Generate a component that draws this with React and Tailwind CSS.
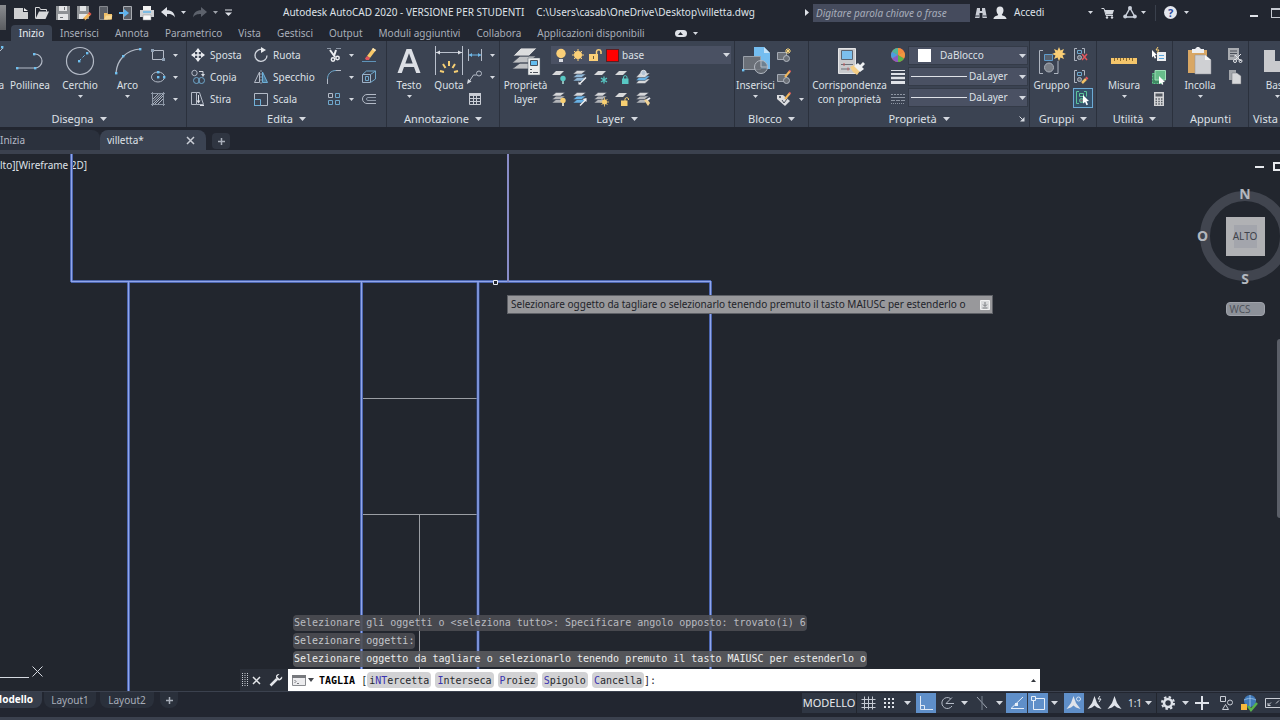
import React, { useState } from 'react';

const Svg = ({ w = 16, h = 16, children }) => (
  <svg
    width={w}
    height={h}
    viewBox={`0 0 ${w} ${h}`}
    fill="none"
    stroke="#b4bbc7"
    className="shrink-0"
    aria-hidden="true"
  >
    {children}
  </svg>
);

const Caret = () => (
  <svg width="7" height="4" viewBox="0 0 7 4" className="shrink-0" aria-hidden="true">
    <path d="M0 0h7L3.500 4z" fill="#d5d9e0" />
  </svg>
);

const SmallCaret = () => (
  <svg width="5" height="3" viewBox="0 0 5 3" className="shrink-0" aria-hidden="true">
    <path d="M0 0h5L2.500 3z" fill="#d5d9e0" />
  </svg>
);

/* ---------- quick access icons ---------- */

const NewIcon = () => (
  <Svg>
    <path d="M1 3h9v4h5v7H1z" fill="#cfd0d2" stroke="none" />
    <path d="M11 3l4 3h-4z" fill="#f0f0f0" stroke="none" />
  </Svg>
);

const OpenIcon = () => (
  <Svg>
    <path d="M1.500 13.500v-11h4l1 2h6v2" stroke="#d8d9db" />
    <path d="M1.500 14L5 6.500h10L11.500 14z" fill="#d8d9db" stroke="none" />
  </Svg>
);

const SaveIcon = () => (
  <Svg>
    <path d="M1 1h14v14H1z" fill="#8f9296" stroke="none" />
    <path d="M4 1h8v5H4zM3 9h10v6H3z" fill="#e4e5e7" stroke="none" />
    <path d="M9.500 2v3M5 12.500h3" stroke="#6d7075" />
  </Svg>
);

const SaveAsIcon = () => (
  <Svg>
    <path d="M1 1h12v13H1z" fill="#8f9296" stroke="none" />
    <path d="M4 1h6v5H4zM3 9h8v5H3z" fill="#e4e5e7" stroke="none" />
    <path d="M8 14.500l6-6" stroke="#f3b65a" strokeWidth="3" />
    <path d="M13 9.500l1.500-1.500" stroke="#d9534b" strokeWidth="3" />
    <path d="M7 15.500l1.500-1.500" stroke="#22262f" strokeWidth="1.500" />
  </Svg>
);

const OpenMobileIcon = () => (
  <Svg>
    <path d="M2.500 1.500h8v13h-8z" fill="#5a5e66" stroke="#85888e" />
    <path d="M7 14.500V8h3l1 1h4v5.500z" fill="#f0c069" stroke="none" />
    <path d="M7 14.500l2-4h6.500l-2 4z" fill="#f8d996" stroke="none" />
  </Svg>
);

const SaveMobileIcon = () => (
  <Svg>
    <path d="M5.500 1.500h8v13h-8z" fill="#5a5e66" stroke="#a9acb2" />
    <path d="M1 7h5V4l5 4-5 4V9H1z" fill="#5fb4ee" stroke="none" />
  </Svg>
);

const PrintIcon = () => (
  <Svg>
    <path d="M4 1h8v4H4z" fill="#f2f2f2" stroke="none" />
    <path d="M1 5h14v7H1z" fill="#cfd1d4" stroke="none" />
    <path d="M4 7h8" stroke="#62b5e8" strokeWidth="1.500" />
    <path d="M4 10h8v5H4z" fill="#fafafa" stroke="#8a8d92" strokeWidth="0.500" />
  </Svg>
);

const UndoIcon = () => (
  <Svg>
    <path d="M1 7l6-5v3.200c4.500 0 7.500 2.300 8 7.300-1.800-3-4-3.600-8-3.600V12z" fill="#dfe2e8" stroke="none" />
  </Svg>
);

const RedoIcon = () => (
  <Svg>
    <path d="M15 7L9 2v3.200c-4.500 0-7.500 2.300-8 7.300 1.800-3 4-3.600 8-3.600V12z" fill="#5d626c" stroke="none" />
  </Svg>
);

/* ---------- draw panel icons ---------- */

const Dot = ({ x, y }) => (
  <rect x={x - 1} y={y - 1} width="2.400" height="2.400" fill="#6fc0f0" stroke="none" />
);

const PolylineIcon = () => (
  <Svg w={32} h={32}>
    <path d="M3 23h18a7 7 0 000-14h-1" strokeWidth="1.200" />
    <Dot x={3} y={23} />
    <Dot x={21} y={23} />
    <Dot x={20} y={9} />
  </Svg>
);

const CircleIcon = () => (
  <Svg w={32} h={32}>
    <circle cx="16" cy="16" r="13.500" strokeWidth="1.200" />
    <path d="M15 16l8-8" stroke="#6fb8e8" strokeDasharray="3 2" />
    <Dot x={15} y={16} />
    <Dot x={23} y={8} />
  </Svg>
);

const ArcIcon = () => (
  <Svg w={32} h={32}>
    <path d="M4 28C5 15 14 5 28 4" strokeWidth="1.200" />
    <Dot x={4} y={28} />
    <Dot x={11} y={11} />
    <Dot x={28} y={4} />
  </Svg>
);

const RectIcon = () => (
  <Svg>
    <path d="M2.500 3.500h11v9h-11z" />
    <path d="M1 2h3v3H1zM12 11h3v3h-3z" fill="#8fa0b4" stroke="none" />
  </Svg>
);

const EllipseIcon = () => (
  <Svg>
    <ellipse cx="8" cy="8" rx="6.500" ry="5" />
    <Dot x={8} y={8} />
    <Dot x={8} y={3} />
    <Dot x={14} y={8} />
  </Svg>
);

const HatchIcon = () => (
  <Svg>
    <path d="M2.500 1v14M13.500 1v14M1 2.500h14M1 13.500h14" stroke="#8d97a6" />
    <path d="M3 8l5-5M3 13L13 3M8 13l5-5M5 13l8-8M3 10.500l7.500-7.500" stroke="#aab2bf" />
  </Svg>
);

/* ---------- edit panel icons ---------- */

const MoveIcon = () => (
  <Svg>
    <path d="M8 2v12M2 8h12" stroke="#e8eaee" strokeWidth="1.500" />
    <path d="M8 1l3 4H5zM8 15l3-4H5zM1 8l4-3v6zM15 8l-4-3v6z" fill="#e8eaee" stroke="none" />
  </Svg>
);

const CopyIcon = () => (
  <Svg>
    <circle cx="4.500" cy="4" r="2.700" />
    <path d="M9 2.500h4v3" stroke="#d5d9e0" />
    <path d="M11 5h4l-2 3z" fill="#d5d9e0" stroke="none" />
    <circle cx="6.500" cy="11.500" r="3" stroke="#6fa8cc" />
    <circle cx="11.500" cy="11.500" r="3" stroke="#6fa8cc" />
  </Svg>
);

const StretchIcon = () => (
  <Svg>
    <path d="M1.500 1.500h5v12h-5zM6.500 1.500h3l4 12H6.500" />
    <path d="M8.500 4v7M10 14.500h4" stroke="#dfe2e8" />
    <path d="M6.500 9.500h4l-2 3z" fill="#dfe2e8" stroke="none" />
  </Svg>
);

const RotateIcon = () => (
  <Svg>
    <path d="M9 2.500a6 6 0 105 6" strokeWidth="1.300" stroke="#d0d5dd" />
    <path d="M8 0l5 3-5 3z" fill="#e8eaee" stroke="none" />
  </Svg>
);

const MirrorIcon = () => (
  <Svg>
    <path d="M6.500 3v10.500h-5z" />
    <path d="M9.500 3v10.500h5z" stroke="#6fb0d8" fill="#4b7896" />
    <path d="M8 1v14" stroke="#8d97a6" strokeDasharray="2 1" />
  </Svg>
);

const ScaleIcon = () => (
  <Svg>
    <path d="M1.500 2.500h13v12h-13z" />
    <path d="M1.500 8.500h6v6h-6z" stroke="#6fb0d8" />
  </Svg>
);

const TrimIcon = () => (
  <Svg>
    <path d="M1 1.500h4M10 1.500h5" stroke="#8d97a6" />
    <path d="M4 3l5 7M10 3L8 9" stroke="#eceef1" strokeWidth="2" />
    <circle cx="7" cy="12.500" r="1.700" stroke="#eceef1" strokeWidth="1.500" />
    <circle cx="11.500" cy="11" r="1.700" stroke="#eceef1" strokeWidth="1.500" />
  </Svg>
);

const FilletIcon = () => (
  <Svg>
    <path d="M1.500 15V10C1.500 5 5 1.500 10 1.500" stroke="#6fa8cc" />
    <path d="M1.500 15v-5M10 1.500h5" />
  </Svg>
);

const ArrayIcon = () => (
  <Svg>
    <path d="M2.500 2.500h4v4h-4z" />
    <path d="M9.500 2.500h4v4h-4zM2.500 9.500h4v4h-4zM9.500 9.500h4v4h-4z" stroke="#6fa8cc" />
  </Svg>
);

const EraseIcon = () => (
  <Svg>
    <path d="M1 14.500h14" stroke="#5f93b8" />
    <path d="M6 9l6-8 3 2-6 8z" fill="#f7c868" stroke="none" />
    <path d="M6 9l3 2-1 2H5l-1-1.500z" fill="#e2565c" stroke="none" />
    <path d="M12 1l3 2-1 1.500-3-2z" fill="#fbe6b8" stroke="none" />
  </Svg>
);

const ExplodeIcon = () => (
  <Svg>
    <path d="M1.500 5.500h8v8h-8z" stroke="#9fb3c8" />
    <path d="M1.500 5.500l4-3.500h9l-5 3.500M14.500 2v8l-5 3.500" stroke="#6fa8cc" />
    <path d="M4.500 7.500h3v4h-3z" stroke="#6fa8cc" />
  </Svg>
);

const OffsetIcon = () => (
  <Svg>
    <path d="M15 3.500H6a4.500 4.500 0 000 9h9" />
    <path d="M15 6.500H7a1.500 1.500 0 000 3h8" stroke="#8d97a6" />
  </Svg>
);

/* ---------- annotation icons ---------- */

const TextIcon = () => (
  <Svg w={24} h={28}>
    <path
      fillRule="evenodd"
      d="M0.500 26L9.500 2h5l9 24h-4.300l-2.200-6H7l-2.200 6zM8.300 16.500h7.400L12 6.200z"
      fill="#dcdfe5"
      stroke="none"
    />
  </Svg>
);

const DimensionIcon = () => (
  <Svg w={30} h={32}>
    <path d="M1.500 1v29M28.500 1v29M2 7.500h26" stroke="#b9c0cc" />
    <path d="M2 7.500l4-2v4zM28 7.500l-4-2v4z" fill="#dcdfe5" stroke="none" />
    <path d="M15 16v5M9 19l2.500 4M21 19l-2.500 4M6 26l4 1M24 26l-4 1" stroke="#f6cf74" strokeWidth="2" />
  </Svg>
);

const LinearIcon = () => (
  <Svg>
    <path d="M1.500 2v12M14.500 2v12" />
    <path d="M2 8h12" stroke="#6fb8e8" />
    <path d="M2 8l3-2v4zM14 8l-3-2v4z" fill="#6fb8e8" stroke="none" />
  </Svg>
);

const LeaderIcon = () => (
  <Svg>
    <circle cx="12" cy="4.500" r="2.500" />
    <path d="M9.500 6H6.500l-4 6" />
    <path d="M0 15l1-5 3.500 2.500z" fill="#d5d9e0" stroke="none" />
  </Svg>
);

const TableIcon = () => (
  <Svg>
    <path d="M2 2h12v3H2z" fill="#c9cdd5" stroke="none" />
    <path d="M2.500 2.500h11v11h-11zM2.500 7.500h11M2.500 10.500h11M6.500 5v8.500M9.500 5v8.500" stroke="#c9cdd5" />
  </Svg>
);

/* ---------- layer icons ---------- */

const LayerPropsIcon = () => (
  <Svg w={30} h={32}>
    <path d="M9 18h16l-8 6H1zM9 11h16l-8 7H1z" fill="#bfc1c4" stroke="#3b4352" strokeWidth="0.800" />
    <path d="M10 3h16l-8 8H2z" fill="#dcddde" stroke="#3b4352" strokeWidth="0.800" />
    <path d="M17 13h12v17H17z" fill="#eceded" stroke="#54606e" strokeWidth="0.500" />
    <path d="M19.500 15.500h7v5h-7z" fill="#63bdf0" stroke="#48525f" />
    <path d="M19 24.500h2M19 27.500h2M22 27.500h5" stroke="#50565f" />
  </Svg>
);

const Sheets = ({ top = '#d7d8da', low = '#b4b6ba' }) => (
  <>
    <path d="M5 8.500h9L9.500 12H1z" fill={low} stroke="#3b4352" strokeWidth="0.500" />
    <path d="M5 5h9L9.500 8.500H1z" fill={low} stroke="#3b4352" strokeWidth="0.500" />
    <path d="M5 1.500h9L9.500 5H1z" fill={top} stroke="#3b4352" strokeWidth="0.500" />
  </>
);

const OneSheet = () => <path d="M5 2h8L9 6H1z" fill="#d7d8da" stroke="none" />;

const LayerOffIcon = () => (
  <Svg>
    <OneSheet />
    <circle cx="12" cy="9.500" r="2.700" fill="#58c8c4" stroke="none" />
    <path d="M11 12h2v3h-2z" fill="#8fb9b8" stroke="none" />
  </Svg>
);

const LayerIsoIcon = () => (
  <Svg>
    <Sheets low="#8fb6d6" />
    <path d="M8 14.500l6-6" stroke="#f2f3f5" strokeWidth="1.500" />
    <path d="M6.500 12.500l3 3h-3z" fill="#f2f3f5" stroke="none" />
  </Svg>
);

const LayerFreezeIcon = () => (
  <Svg>
    <OneSheet />
    <path d="M11 7.500v7M8 9l6 4M14 9l-6 4" stroke="#58c8c4" strokeWidth="1.300" />
  </Svg>
);

const LayerLockIcon = () => (
  <Svg>
    <OneSheet />
    <path d="M9.500 10V8a1.800 1.800 0 013.500 0v2" stroke="#58c8c4" />
    <path d="M8 9.500h6.500V15H8z" fill="#58c8c4" stroke="none" />
  </Svg>
);

const LayerCurrentIcon = () => (
  <Svg>
    <path d="M5 10h10l-5 4.500H1z" fill="#d7d8da" stroke="#3b4352" strokeWidth="0.500" />
    <path d="M5 7h10l-5 4.500H1z" fill="#69b3e6" stroke="#3b4352" strokeWidth="0.500" />
    <path d="M5 4h10l-5 4.500H1z" fill="#d7d8da" stroke="#3b4352" strokeWidth="0.500" />
    <circle cx="8.500" cy="4" r="2.700" fill="#b4c4d4" stroke="#e0e3e8" />
  </Svg>
);

const LayerOnIcon = () => (
  <Svg>
    <Sheets />
    <circle cx="12" cy="9.500" r="2.700" fill="#f7cf72" stroke="none" />
    <path d="M11 12h2v3h-2z" fill="#d8d2c0" stroke="none" />
  </Svg>
);

const LayerUnisoIcon = () => (
  <Svg>
    <Sheets low="#69b3e6" />
    <path d="M8 14.500l6-6" stroke="#f2f3f5" strokeWidth="1.500" />
    <path d="M14.500 7v4l-4-3z" fill="#f2f3f5" stroke="none" />
  </Svg>
);

const LayerThawIcon = () => (
  <Svg>
    <Sheets />
    <circle cx="11.500" cy="11" r="2.500" fill="#f7cf72" stroke="none" />
    <path d="M11.500 6.500v9M7 11h9M8.500 8l6 6M14.500 8l-6 6" stroke="#f7cf72" strokeWidth="0.800" />
  </Svg>
);

const LayerUnlockIcon = () => (
  <Svg>
    <OneSheet />
    <path d="M11 10V8a1.800 1.800 0 013.500 0v1" stroke="#f7cf72" />
    <path d="M7 9.500h6.500V15H7z" fill="#f7cf72" stroke="none" />
  </Svg>
);

const LayerMatchIcon = () => (
  <Svg>
    <Sheets />
    <path d="M9 9l3-1 3 4-2 3z" fill="#f0d296" stroke="none" />
    <path d="M12 9l3-2" stroke="#e8eaee" strokeWidth="2" />
  </Svg>
);

const BulbIcon = () => (
  <Svg w={14}>
    <circle cx="7" cy="6.500" r="4.700" fill="#fbcf78" stroke="none" />
    <path d="M5 12h4v3H5z" fill="#d9dbe0" stroke="none" />
  </Svg>
);

const SunIcon = () => (
  <Svg w={14}>
    <circle cx="7" cy="8" r="4" fill="#fbcf78" stroke="none" />
    <path d="M7 2v12M1 8h12M3 4l8 8M11 4l-8 8" stroke="#fbcf78" />
  </Svg>
);

const PadlockIcon = () => (
  <Svg w={14}>
    <path d="M8.500 7V4.500a2.300 2.300 0 014.500 0V7" stroke="#fbcf78" strokeWidth="1.500" />
    <path d="M1 7h9v7H1z" fill="#fbcf78" stroke="none" />
    <path d="M5.500 9v3" stroke="#6d5b36" />
  </Svg>
);

/* ---------- block icons ---------- */

const InsertIcon = () => (
  <Svg w={30} h={32}>
    <path d="M13 2h10l6 6v16H13z" fill="#74bdf0" stroke="none" />
    <path d="M23 2l6 6h-6z" fill="#c3e2f8" stroke="none" />
    <path d="M2.500 11.500h17v13h-17z" fill="#6b7078" stroke="#9aa0a9" />
    <circle cx="20" cy="22" r="6.500" fill="#6b7078" fillOpacity="0.800" stroke="#b4bac3" />
    <path d="M20 16v6h6" stroke="#b4bac3" />
    <Dot x={2} y={25} />
  </Svg>
);

const SmallBlock = () => (
  <>
    <path d="M1.500 5.500h9v7h-9z" fill="#6b7078" stroke="#a4aab4" />
    <circle cx="10.500" cy="11.500" r="3" fill="#6b7078" stroke="#b4bac3" />
  </>
);

const CreateBlockIcon = () => (
  <Svg>
    <SmallBlock />
    <path d="M12 1v6M9 4h6M10 2l4 4M14 2l-4 4" stroke="#f9d67e" />
  </Svg>
);

const EditBlockIcon = () => (
  <Svg>
    <SmallBlock />
    <path d="M9 8l5-6" stroke="#f3b65a" strokeWidth="2" />
    <path d="M13.500 2.500l1-1" stroke="#e2565c" strokeWidth="2" />
  </Svg>
);

const AttribIcon = () => (
  <Svg>
    <path d="M1 4l6 0 7 6-5 5-8-7z" fill="#dcdde0" stroke="none" />
    <circle cx="4" cy="6" r="1" fill="#3b4352" stroke="none" />
    <path d="M6 9l2 3 3-4" stroke="#4a4f59" />
    <path d="M9 8l5-6" stroke="#f3b65a" strokeWidth="2" />
    <path d="M13.500 2.500l1-1" stroke="#e2565c" strokeWidth="2" />
  </Svg>
);

/* ---------- properties icons ---------- */

const MatchPropsIcon = () => (
  <Svg w={30} h={32}>
    <path d="M3.500 3.500h17v25h-17z" fill="#c9cacd" stroke="#e4e5e7" />
    <path d="M6.500 5.500h11v9h-11z" fill="#7cc0ee" stroke="#5d6672" />
    <path d="M6 19.500h12M6 24h9" stroke="#6b7078" />
    <path d="M9 18v3M13 22.500v3" stroke="#c7595b" />
    <path d="M15 22l4-2 6 6-3 4-4-3z" fill="#f4cd84" stroke="none" />
    <path d="M19 21l4-3 2 2 3-3 2 2-3 3 2 2-4 3z" fill="#eef0f2" stroke="none" />
  </Svg>
);

const ColorWheelIcon = () => (
  <Svg>
    <circle cx="8" cy="8" r="7" fill="#e9594c" stroke="none" />
    <path d="M8 8V1a7 7 0 016 3.500z" fill="#f18c3e" stroke="none" />
    <path d="M8 8l6-3.500a7 7 0 010 7z" fill="#f0983f" stroke="none" />
    <path d="M8 8l6 3.500A7 7 0 018 15z" fill="#58b947" stroke="none" />
    <path d="M8 8v7a7 7 0 01-6-3.500z" fill="#8a5cc4" stroke="none" />
    <path d="M8 8l-6 3.500a7 7 0 010-7z" fill="#4a9fe0" stroke="none" />
    <path d="M8 8L2 4.500A7 7 0 018 1z" fill="#4fb89a" stroke="none" />
  </Svg>
);

const WeightIcon = () => (
  <Svg>
    <path d="M1 1.500h14" stroke="#dfe2e7" />
    <path d="M1 5h14" stroke="#dfe2e7" strokeWidth="2" />
    <path d="M1 9h14" stroke="#dfe2e7" strokeWidth="2.500" />
    <path d="M1 13.500h14" stroke="#dfe2e7" strokeWidth="3" />
  </Svg>
);

const LinetypeIcon = () => (
  <Svg>
    <path d="M1 3.500h14" stroke="#8d95a2" strokeDasharray="2 1" />
    <path d="M1 6.500h14" stroke="#8d95a2" />
    <path d="M1 9.500h14" stroke="#8d95a2" strokeDasharray="4 1" />
    <path d="M1 12.500h14" stroke="#8d95a2" strokeDasharray="1 1" />
  </Svg>
);

const LauncherIcon = () => (
  <Svg w={6} h={6}>
    <path d="M0.500 0.500l3 3" stroke="#d5d9e0" />
    <path d="M5.500 1v4.500H1z" fill="#d5d9e0" stroke="none" />
  </Svg>
);

/* ---------- group, utility and clipboard icons ---------- */

const Star = ({ x, y }) => (
  <g transform={`translate(${x} ${y})`}>
    <path
      d="M0-7l1.500 3.500L5-5 3.500-1.500 7 0 3.500 1.500 5 5 1.500 3.500 0 7l-1.500-3.500L-5 5l1.500-3.500L-7 0l3.500-1.500L-5-5l3.500 1.500z"
      fill="#f9ce75"
      stroke="none"
    />
  </g>
);

const GroupIcon = () => (
  <Svg w={30} h={32}>
    <path d="M6 5.500H2.500v23H6M17 28.500h4V16" stroke="#aeb5c0" />
    <path d="M7.500 9.500h8v6h-8z" fill="#56616f" stroke="#5f9ccc" />
    <circle cx="12" cy="22.500" r="4.500" fill="#7a7f87" stroke="#a9afb9" />
    <Star x={22} y={9} />
  </Svg>
);

const SmallGroup = ({ color = '#aeb5c0', box = '#6fa8cc' }) => (
  <>
    <path d="M4 1.500H1.500v12H4M9 1.500h2.500v5" stroke={color} />
    <path d="M4.500 3.500h4v3h-4z" stroke={box} />
    <circle cx="6.500" cy="10.500" r="2" fill="#6b7078" stroke={color} />
  </>
);

const UngroupIcon = () => (
  <Svg>
    <SmallGroup />
    <path d="M9 7l5 6M14 7l-5 6" stroke="#e2565c" strokeWidth="1.500" />
  </Svg>
);

const GroupEditIcon = () => (
  <Svg>
    <SmallGroup />
    <path d="M9 14l4-4" stroke="#f3c266" strokeWidth="2.500" />
    <path d="M13 10l1.500-1.500" stroke="#e2565c" strokeWidth="2.500" />
  </Svg>
);

const GroupSelectIcon = () => (
  <Svg>
    <SmallGroup color="#5cc59a" box="#5cc59a" />
    <path d="M8 5l6 6-2.500.3L13 14.500l-1.500.7-1.400-3.200L8 13.500z" fill="#fff" stroke="none" />
  </Svg>
);

const MeasureIcon = () => (
  <Svg w={28} h={32}>
    <path d="M1 13h26v6H1z" fill="#f5c66b" stroke="none" />
    <path d="M4.500 13v3M7.500 13v2M10.500 13v3M13.500 13v2M16.500 13v3M19.500 13v2M22.500 13v3" stroke="#8a6a2c" />
  </Svg>
);

const QuickSelectIcon = () => (
  <Svg>
    <path d="M6 5h9v9H6z" fill="#eceef1" stroke="none" />
    <path d="M8 8.500h5M8 11.500h5" stroke="#58a6de" />
    <path d="M1 3l5 5-2 .2L5.200 11l-1.500.6L2.600 9 1 10.500z" fill="#fff" stroke="none" />
    <path d="M7 0L5 3h3L6 6" stroke="#f9ce75" />
  </Svg>
);

const SelectAllIcon = () => (
  <Svg>
    <path d="M1.500 4.500h10v10h-10z" fill="#3f8a63" stroke="#5cc58a" strokeDasharray="2 1" />
    <path d="M4 1.500h10.500V11H4z" fill="#67bd8a" stroke="#9fe0b8" />
    <path d="M8 7l6 6-2.500.3.8 2-1.300.5-1-2L8 15z" fill="#fff" stroke="none" />
  </Svg>
);

const CalcIcon = () => (
  <Svg>
    <path d="M3 1h10v14H3z" fill="#d3d4d7" stroke="none" />
    <path d="M4.500 2.500h7v3h-7z" fill="#555a62" stroke="none" />
    <path d="M4.500 8h1.500M7.300 8h1.500M10 8h1.500M4.500 10.500h1.500M7.300 10.500h1.500M10 10.500h1.500M4.500 13h1.500M7.300 13h1.500M10 13h1.500" stroke="#555a62" strokeWidth="1.500" />
  </Svg>
);

const PasteIcon = () => (
  <Svg w={28} h={32}>
    <path d="M2 5h19v23H2z" fill="#d9a764" stroke="none" />
    <path d="M6 4h3l2-2h2l2 2h3v4H6z" fill="#eceef1" stroke="none" />
    <path d="M9 10h10l6 5v14H9z" fill="#cfd0d3" stroke="#8f9298" strokeWidth="0.500" />
    <path d="M19 10l6 5h-6z" fill="#f5f5f6" stroke="none" />
  </Svg>
);

const CutClipIcon = () => (
  <Svg>
    <path d="M1 1h11v12H1z" fill="#a9acb1" stroke="none" />
    <path d="M3 4h7M3 6.500h7M3 9h4" stroke="#4a4f59" />
    <path d="M8 8l6 6M14 7l-6 6" stroke="#e4e6ea" />
    <circle cx="13.500" cy="14" r="1.500" stroke="#e4e6ea" />
    <circle cx="8" cy="14" r="1.500" stroke="#e4e6ea" />
  </Svg>
);

const CopyClipIcon = () => (
  <Svg>
    <path d="M2 1h7v10H2z" fill="#a3a6ab" stroke="none" />
    <path d="M5 4h5l4 3v8H5z" fill="#d7d8da" stroke="#6d7178" strokeWidth="0.500" />
  </Svg>
);

const BaseIcon = () => (
  <Svg w={28} h={32}>
    <path d="M1 5h11v11h15v11H1z" fill="#c9cacd" stroke="none" />
  </Svg>
);

/* ---------- ribbon parts ---------- */

const BigTool = ({ icon, label, caret, width }) => (
  <button className={`flex flex-col items-center shrink-0 h-[66px] ${width}`}>
    <span className="h-[34px] flex items-center">{icon}</span>
    <span className="leading-[14px] whitespace-pre-line text-center">{label}</span>
    {caret && (
      <span className="h-2 flex items-center">
        <SmallCaret />
      </span>
    )}
  </button>
);

const SmallTool = ({ icon, label, caret, name }) => (
  <button aria-label={name || label} className="h-[22px] flex items-center gap-1 whitespace-nowrap">
    {icon}
    {label && <span>{label}</span>}
    {caret && (
      <span className="w-[10px] flex justify-center">
        <SmallCaret />
      </span>
    )}
  </button>
);

const Panel = ({ title, width, caret = true, shift = 'justify-center', launcher, children }) => (
  <section className={`flex flex-col shrink-0 border-r border-[#2b313d] ${width}`}>
    <div className="flex h-[70px] pt-[3px]">{children}</div>
    <button className={`h-4 flex items-center gap-[6px] ${shift}`}>
      <span className="text-[11px] leading-4">{title}</span>
      {caret && <Caret />}
      {launcher && (
        <span className="absolute right-1">
          <LauncherIcon />
        </span>
      )}
    </button>
  </section>
);

const TABS = [
  'Inserisci',
  'Annota',
  'Parametrico',
  'Vista',
  'Gestisci',
  'Output',
  'Moduli aggiuntivi',
  'Collabora',
  'Applicazioni disponibili',
];

const LAYER_TOOLS = [
  ['Layer off', <LayerOffIcon />],
  ['Isola', <LayerIsoIcon />],
  ['Congela', <LayerFreezeIcon />],
  ['Blocca', <LayerLockIcon />],
  ['Rendi corrente', <LayerCurrentIcon />],
  ['Attiva tutti i layer', <LayerOnIcon />],
  ['Annulla isolamento', <LayerUnisoIcon />],
  ['Scongela tutti i layer', <LayerThawIcon />],
  ['Sblocca', <LayerUnlockIcon />],
  ['Corrispondenza layer', <LayerMatchIcon />],
];

const TitleBar = () => (
  <header className="h-[25px] shrink-0 flex items-center text-[#dfe2e8]">
    <div className="w-[283px] shrink-0 flex items-center">
      <button aria-label="Menu applicazione" className="w-[6px] h-[25px] mt-[10px] mr-1 bg-linear-to-b from-[#8a8c90] to-[#5a5c60]" />
      {[
        ['Nuovo', <NewIcon />],
        ['Apri', <OpenIcon />],
        ['Salva', <SaveIcon />],
        ['Salva con nome', <SaveAsIcon />],
        ['Apri da Web e Mobile', <OpenMobileIcon />],
        ['Salva in Web e Mobile', <SaveMobileIcon />],
        ['Stampa', <PrintIcon />],
        ['Annulla', <UndoIcon />],
      ].map(([name, icon]) => (
        <button key={name} aria-label={name} className="w-[21px] flex justify-center">
          {icon}
        </button>
      ))}
      <button aria-label="Elenco annulla" className="w-[11px] flex justify-center"><SmallCaret /></button>
      <button aria-label="Ripeti" className="w-[21px] flex justify-center"><RedoIcon /></button>
      <button aria-label="Elenco ripeti" className="w-[11px] flex justify-center opacity-70"><SmallCaret /></button>
      <button aria-label="Personalizza" className="w-[14px] flex justify-center">
        <Svg w={7} h={8}>
          <path d="M0 1h7" stroke="#dfe2e8" />
          <path d="M0 3.500h7L3.500 7z" fill="#dfe2e8" stroke="none" />
        </Svg>
      </button>
    </div>
    <h1 className="flex-1 flex gap-3 whitespace-nowrap text-[10px]">
      <span>Autodesk AutoCAD 2020 - VERSIONE PER STUDENTI</span>
      <span>C:\Users\casab\OneDrive\Desktop\villetta.dwg</span>
    </h1>
    <div className="w-[475px] shrink-0 flex items-center overflow-hidden *:shrink-0">
      <span className="w-2">
        <Svg w={4} h={7}><path d="M0 0l4 3.500L0 7z" fill="#dfe2e8" stroke="none" /></Svg>
      </span>
      <input
        aria-label="Ricerca"
        placeholder="Digitare parola chiave o frase"
        className="w-[157px] h-[18px] px-[3px] bg-[#454b5d] text-[10px] italic placeholder:text-[#a7adba]"
      />
      <button aria-label="Cerca" className="w-[22px] flex justify-center">
        <Svg w={14}>
          <path d="M3 3h3v3h2V3h3l2 10H8.500V8h-3v5H1z" fill="#c9cdd5" stroke="none" />
          <path d="M1 11h4M9 11h4" stroke="#343a47" />
        </Svg>
      </button>
      <button className="w-[101px] flex items-center gap-[6px] text-[10px]">
        <Svg w={16}>
          <path d="M8 1.500c2.300 0 3.500 1.700 3.500 3.800S10.500 9 9.800 9.700c0 1 4.700 1.200 4.700 4.300h-13c0-3.100 4.700-3.300 4.700-4.300C5.500 9 4.500 7.400 4.500 5.300S5.700 1.500 8 1.500z" fill="#e0e3e8" stroke="none" />
        </Svg>
        <span className="flex-1 text-left">Accedi</span>
        <SmallCaret />
      </button>
      <button aria-label="App Store" className="w-[30px] flex justify-center">
        <Svg w={14}>
          <path d="M0.500 3.500h2.500l2 7h7" stroke="#d5d9e0" />
          <path d="M3.500 5H13l-1.500 4.500H5z" fill="#d5d9e0" stroke="none" />
          <circle cx="6" cy="12.500" r="1.200" fill="#d5d9e0" stroke="none" />
          <circle cx="11" cy="12.500" r="1.200" fill="#d5d9e0" stroke="none" />
        </Svg>
      </button>
      <button aria-label="Rete Autodesk" className="w-[33px] flex items-center gap-1 border-r border-[#3a404c]">
        <Svg w={14}>
          <path d="M7 3l5 9H2z" stroke="#c9cfda" strokeWidth="1.500" />
          <circle cx="7" cy="3" r="2" fill="#c9cfda" stroke="none" />
          <circle cx="2.200" cy="11.500" r="2" fill="#c9cfda" stroke="none" />
          <circle cx="11.800" cy="11.500" r="2" fill="#c9cfda" stroke="none" />
        </Svg>
        <SmallCaret />
      </button>
      <button aria-label="Guida" className="w-[94px] pl-2 flex items-center gap-[7px]">
        <span className="w-[13px] h-[13px] rounded-full bg-[#e4e7ee] text-[#2c4a9c] text-[11px] leading-[13px] font-bold">?</span>
        <SmallCaret />
      </button>
      <button aria-label="Riduci a icona" className="w-[21px] h-3 flex items-end pb-[2px]">
        <span className="w-2 h-[2px] bg-[#dfe2e8]" />
      </button>
      <button aria-label="Ingrandisci" className="w-[11px] h-[10px] border border-t-2 border-[#c5c9d1]" />
    </div>
  </header>
);

const TabBar = () => (
  <nav className="h-4 shrink-0 flex items-center pl-[11px] text-[10px] text-[#a8aeb9]">
    <button className="h-4 w-[41px] rounded-t-sm bg-[#3b4352] text-[#eceef2]">Inizio</button>
    {TABS.map((tab) => (
      <button key={tab} className="px-[8px] whitespace-nowrap">{tab}</button>
    ))}
    <button aria-label="Riduci barra multifunzione" className="ml-[22px] flex items-center gap-[6px]">
      <span className="w-3 h-[7px] rounded-sm bg-[#dfe2e8] flex items-center justify-center">
        <Svg w={5} h={3}><path d="M0 3h5L2.500 0z" fill="#22262f" stroke="none" /></Svg>
      </span>
      <SmallCaret />
    </button>
  </nav>
);

const PropertyCombo = ({ name, value, children }) => (
  <div className="h-[19px] pr-px flex items-center bg-[#4a5163] border border-[#343b48]">
    {children}
    <select aria-label={name} className="appearance-none bg-transparent w-[42px] shrink-0 text-[10px]">
      <option>{value}</option>
    </select>
    <span className="ml-auto"><Caret /></span>
  </div>
);

const Ribbon = () => (
  <div className="h-[86px] shrink-0 flex bg-[#3b4352] text-[10px] text-[#dde0e6] overflow-hidden">
    <Panel title="Disegna" width="w-[187px]" shift="justify-center pr-[28px]">
      <button className="w-[5px] shrink-0 h-[66px] flex flex-col items-end overflow-hidden pr-px">
        <span className="h-[34px]">
          <Svg w={5} h={14}>
            <path d="M0 8l4-4" />
            <Dot x={3} y={3} />
          </Svg>
        </span>
        <span className="leading-[14px]">Linea</span>
      </button>
      <BigTool icon={<PolylineIcon />} label="Polilinea" width="w-[50px]" />
      <BigTool icon={<CircleIcon />} label="Cerchio" caret width="w-[50px]" />
      <BigTool icon={<ArcIcon />} label="Arco" caret width="w-[45px]" />
      <div className="flex flex-col">
        <SmallTool icon={<RectIcon />} name="Rettangolo" caret />
        <SmallTool icon={<EllipseIcon />} name="Ellisse" caret />
        <SmallTool icon={<HatchIcon />} name="Tratteggio" caret />
      </div>
    </Panel>

    <Panel title="Edita" width="w-[200px]">
      <div className="w-[63px] pl-[3px] flex flex-col">
        <SmallTool icon={<MoveIcon />} label="Sposta" />
        <SmallTool icon={<CopyIcon />} label="Copia" />
        <SmallTool icon={<StretchIcon />} label="Stira" />
      </div>
      <div className="w-[76px] pl-[3px] flex flex-col">
        <SmallTool icon={<RotateIcon />} label="Ruota" />
        <SmallTool icon={<MirrorIcon />} label="Specchio" />
        <SmallTool icon={<ScaleIcon />} label="Scala" />
      </div>
      <div className="w-[35px] flex flex-col">
        <SmallTool icon={<TrimIcon />} name="Taglia" caret />
        <SmallTool icon={<FilletIcon />} name="Raccorda" caret />
        <SmallTool icon={<ArrayIcon />} name="Serie" caret />
      </div>
      <div className="flex flex-col">
        <SmallTool icon={<EraseIcon />} name="Cancella" />
        <SmallTool icon={<ExplodeIcon />} name="Esplodi" />
        <SmallTool icon={<OffsetIcon />} name="Offset" />
      </div>
    </Panel>

    <Panel title="Annotazione" width="w-[113px]">
      <BigTool icon={<TextIcon />} label="Testo" caret width="w-[44px]" />
      <BigTool icon={<DimensionIcon />} label="Quota" width="w-[36px]" />
      <div className="flex flex-col">
        <SmallTool icon={<LinearIcon />} name="Lineare" caret />
        <SmallTool icon={<LeaderIcon />} name="Direttrice" caret />
        <SmallTool icon={<TableIcon />} name="Tabella" />
      </div>
    </Panel>

    <Panel title="Layer" width="w-[235px]">
      <BigTool icon={<LayerPropsIcon />} label={'Proprietà\nlayer'} width="w-[51px]" />
      <div className="w-[180px]">
        <div className="h-[18px] mt-[2px] mb-[2px] pl-[3px] pr-px flex items-center gap-[3px] bg-[#4a5163]">
          <BulbIcon />
          <SunIcon />
          <PadlockIcon />
          <span className="w-[13px] h-[13px] ml-px bg-[#ff0000] border border-[#5c1d22]" />
          <select aria-label="Layer corrente" className="appearance-none bg-transparent flex-1 text-[10px]">
            <option>base</option>
          </select>
          <Caret />
        </div>
        <div className="grid grid-cols-[repeat(5,21px)]">
          {LAYER_TOOLS.map(([name, icon]) => (
            <SmallTool key={name} icon={icon} name={name} />
          ))}
        </div>
      </div>
    </Panel>

    <Panel title="Blocco" width="w-[74px]">
      <BigTool icon={<InsertIcon />} label="Inserisci" caret width="w-[41px]" />
      <div className="flex flex-col">
        <SmallTool icon={<CreateBlockIcon />} name="Crea blocco" />
        <SmallTool icon={<EditBlockIcon />} name="Editor blocchi" />
        <SmallTool icon={<AttribIcon />} name="Modifica attributi" caret />
      </div>
    </Panel>

    <Panel title="Proprietà" width="relative w-[221px]" launcher>
      <BigTool icon={<MatchPropsIcon />} label={'Corrispondenza\ncon proprietà'} width="w-[81px]" />
      <div className="w-[18px] flex flex-col">
        <SmallTool icon={<ColorWheelIcon />} name="Colore oggetto" />
        <SmallTool icon={<WeightIcon />} name="Spessore linea" />
        <SmallTool icon={<LinetypeIcon />} name="Tipo di linea" />
      </div>
      <div className="flex-1 pt-[2px] pr-px flex flex-col gap-[2px]">
        <div className="h-[19px] pl-[9px] pr-px flex items-center bg-[#4a5163] border border-[#343b48]">
          <span className="w-[13px] h-[13px] mr-[9px] bg-white" />
          <select aria-label="Colore" className="appearance-none bg-transparent flex-1 text-[10px]">
            <option>DaBlocco</option>
          </select>
          <Caret />
        </div>
        <PropertyCombo name="Spessore" value="DaLayer">
          <span className="w-[56px] h-px mx-[2px] shrink-0 bg-[#dfe2e8]" />
        </PropertyCombo>
        <PropertyCombo name="Tipo linea" value="DaLayer">
          <span className="w-[56px] h-px mx-[2px] shrink-0 bg-[#dfe2e8]" />
        </PropertyCombo>
      </div>
    </Panel>

    <Panel title="Gruppi" width="w-[67px]">
      <BigTool icon={<GroupIcon />} label="Gruppo" width="w-[43px]" />
      <div className="flex flex-col">
        <SmallTool icon={<UngroupIcon />} name="Separa" />
        <SmallTool icon={<GroupEditIcon />} name="Modifica gruppo" />
        <button aria-label="Selezione gruppo" className="w-5 h-5 flex items-center justify-center border border-[#6cabd6] bg-[#35516b]">
          <GroupSelectIcon />
        </button>
      </div>
    </Panel>

    <Panel title="Utilità" width="w-[76px]">
      <BigTool icon={<MeasureIcon />} label="Misura" caret width="w-[54px]" />
      <div className="flex flex-col">
        <SmallTool icon={<QuickSelectIcon />} name="Selezione rapida" />
        <SmallTool icon={<SelectAllIcon />} name="Seleziona tutto" />
        <SmallTool icon={<CalcIcon />} name="Calcolatrice" />
      </div>
    </Panel>

    <Panel title="Appunti" width="w-[76px]" caret={false}>
      <BigTool icon={<PasteIcon />} label="Incolla" caret width="w-[54px]" />
      <div className="flex flex-col">
        <SmallTool icon={<CutClipIcon />} name="Taglia negli appunti" />
        <SmallTool icon={<CopyClipIcon />} name="Copia negli appunti" />
      </div>
    </Panel>

    <Panel title="Vista" width="w-[64px]" shift="justify-start pl-1">
      <BigTool icon={<BaseIcon />} label="Base" caret width="w-[56px]" />
    </Panel>
  </div>
);

const FileTabs = () => (
  <div className="h-[27px] shrink-0 flex items-end border-b-4 border-[#3b414e] text-[10px]">
    <button className="w-[100px] h-5 text-left rounded-tr-lg bg-[#2b313d] text-[#b4bac5]">Inizia</button>
    <div className="w-[106px] h-5 pl-[7px] pr-[11px] flex items-center justify-between rounded-t-lg bg-[#3b4352] text-[#dfe2e8]">
      <span>villetta*</span>
      <button aria-label="Chiudi">
        <Svg w={9} h={9}><path d="M1 1l7 7M8 1L1 8" stroke="#c9cdd5" strokeWidth="1.500" /></Svg>
      </button>
    </div>
    <button aria-label="Nuovo disegno" className="w-[18px] h-4 ml-[6px] mb-px flex items-center justify-center rounded bg-[#2f3541]">
      <Svg w={7} h={7}><path d="M3.500 0v7M0 3.500h7" stroke="#a8aeb9" strokeWidth="1.500" /></Svg>
    </button>
  </div>
);

/* selected entities glow blue, the others stay thin and grey */
const SELECTED = 'M71.500 0V128M71 127.500H711M128.500 127V600M361.500 128V600M478 128V600M710.500 127V600';

const Drawing = () => (
  <svg className="absolute inset-0 w-full h-full" fill="none" aria-hidden="true">
    <path d="M362 244.500H478M362 360.500H478M419.500 361V600" stroke="#9b9ea4" />
    <path d={SELECTED} stroke="#34509c" strokeWidth="3" />
    <path d={SELECTED} stroke="#92a6ea" strokeWidth="1.500" />
    <path d="M508 0V128" stroke="#5c62a8" strokeWidth="2" />
    <path d="M508 0V128" stroke="#b5b6e6" strokeWidth="1" />
    <path d="M493.500 126.500h4v4h-4z" fill="#22262e" stroke="#e8eaf2" />
    <path d="M0 523.500H29M32.500 512.500l10 10M42.500 512.500l-10 10" stroke="#d5d9e0" />
  </svg>
);

const ViewCube = () => (
  <div className="absolute top-[34px] right-[-11px] w-[92px] flex flex-col items-center">
    <svg width="92" height="96" viewBox="0 0 92 96" aria-hidden="true">
      <circle cx="46" cy="48" r="40" fill="none" stroke="#41454f" strokeWidth="10" />
    </svg>
    <span className="absolute top-[-2px] text-[14px] leading-4 font-bold text-[#b3b7be]">N</span>
    <span className="absolute bottom-[29px] text-[14px] leading-4 font-bold text-[#b3b7be]">S</span>
    <span className="absolute top-10 left-[-2px] text-[14px] leading-4 font-bold text-[#b3b7be]">O</span>
    <button className="absolute top-[29px] w-[39px] h-[39px] bg-[#a3a5ac] border-8 border-[#b0b1b4] text-[10px] text-[#3f434b] flex items-center justify-center">
      ALTO
    </button>
    <button className="mt-[18px] w-[39px] h-[14px] rounded bg-[#8d9199] border border-[#9fa2aa] text-[10px] leading-3 text-left pl-[3px] text-[#4f535b]">
      WCS
    </button>
  </div>
);

const Option = ({ hot, pre = '', rest }) => (
  <button className="h-4 px-[2px] rounded-sm bg-[#d2d2d4]">
    {pre}
    <span className="text-[#3a34b0]">{hot}</span>
    {rest}
  </button>
);

const CommandLine = () => {
  const [command, setCommand] = useState('');

  return (
    <div className="absolute left-[240px] right-[240px] bottom-0 font-['DejaVu_Sans_Mono','Liberation_Mono',monospace] text-[10px]">
      <div className="ml-[53px] mb-[2px] flex flex-col items-start gap-[2px] leading-4 whitespace-nowrap">
        <p className="px-px rounded-sm bg-[#4b4d52]/90 text-[#b9bbc0]">
          Selezionare gli oggetti o &lt;seleziona tutto&gt;: Specificare angolo opposto: trovato(i) 6
        </p>
        <p className="px-px rounded-sm bg-[#4b4d52]/90 text-[#c5c7cb]">Selezionare oggetti:</p>
        <p className="px-px rounded-sm bg-[#5a5b5e]/90 text-[#eceded]">
          Selezionare oggetto da tagliare o selezionarlo tenendo premuto il tasto MAIUSC per estenderlo o
        </p>
      </div>
      <div className="h-[22px] flex">
        <div className="w-12 shrink-0 pl-px flex items-center gap-1 bg-[#2a2f39]">
          <Svg w={7} h={16}>
            <path d="M1.500 1v14M4 1v14M6.500 1v14" stroke="#c9cdd5" strokeDasharray="1 1" />
          </Svg>
          <button aria-label="Chiudi riga di comando">
            <Svg w={9} h={9}><path d="M1 1l7 7M8 1L1 8" stroke="#e4e6ea" strokeWidth="1.500" /></Svg>
          </button>
          <button aria-label="Personalizza riga di comando" className="ml-1">
            <Svg w={14} h={14}>
              <path d="M1.500 12.500L8 6" stroke="#e4e6ea" strokeWidth="2.500" />
              <path d="M13 3.500L10.500 6 8 3.500 10.500 1C8.500.5 6.500 2 7 4.500s3 3.500 4.500 2.500S13.700 5 13 3.500z" fill="#e4e6ea" stroke="none" />
            </Svg>
          </button>
        </div>
        <div className="flex-1 pl-1 pr-1 flex items-center bg-white text-[#26282c]">
          <button aria-label="Comandi recenti" className="flex items-center gap-[2px] mr-[5px]">
            <Svg w={14} h={11}>
              <path d="M0.500 0.500h13v10H0.500z" fill="#ececee" stroke="#8a8c90" />
              <path d="M0 0h14v3H0z" fill="#77797d" stroke="none" />
              <path d="M2.500 5l1.500 1.500L2.500 8M5 8.500h2" stroke="#77797d" />
            </Svg>
            <Svg w={6} h={4}><path d="M0 0h6L3 4z" fill="#44474d" stroke="none" /></Svg>
          </button>
          <label htmlFor="command" className="font-bold text-black mr-[6px]">TAGLIA</label>
          <div className="flex items-center gap-1">
            <span className="-mr-1">[</span>
            <Option pre="i" hot="NT" rest="ercetta" />
            <Option hot="I" rest="nterseca" />
            <Option hot="P" rest="roiez" />
            <Option hot="S" rest="pigolo" />
            <Option hot="C" rest="ancella" />
            <span className="-ml-1">]:</span>
          </div>
          <input
            id="command"
            value={command}
            onChange={(e) => setCommand(e.target.value)}
            className="flex-1 min-w-0 outline-none"
          />
          <button aria-label="Cronologia"><Svg w={5} h={3}><path d="M0 3h5L2.500 0z" fill="#33363c" stroke="none" /></Svg></button>
        </div>
      </div>
    </div>
  );
};

const Canvas = () => (
  <main className="relative flex-1 overflow-hidden bg-[#22262e] border-b border-[#3b414e]">
    <p className="absolute top-[3px] left-0 text-[10px] leading-4 text-[#dfe2e8]">lto][Wireframe 2D]</p>
    <Drawing />
    <button aria-label="Riduci vista" className="absolute top-3 right-4 w-[9px] h-1 border-t-2 border-[#e8eaee]" />
    <button aria-label="Ripristina vista" className="absolute top-2 right-[-2px] w-[9px] h-[9px] border-2 border-[#e8eaee]" />
    <ViewCube />
    <div className="absolute top-[185px] right-0 w-[3px] h-[179px] rounded-l bg-[#5b5f68]" />
    <div role="tooltip" className="absolute top-[141px] left-[507px] w-[486px] h-[19px] pl-[3px] pr-[2px] flex items-center justify-between bg-[#98989b] border border-[#5e6066] text-[10px] text-[#22242a] whitespace-nowrap">
      <span>Selezionare oggetto da tagliare o selezionarlo tenendo premuto il tasto MAIUSC per estenderlo o</span>
      <Svg w={10} h={10}>
        <path d="M0.500 0.500h9v9h-9z" fill="#d9dadd" stroke="#f0f0f2" />
        <path d="M5 2v4M3 4.500L5 6.500l2-2M2.500 8h5" stroke="#77797f" />
      </Svg>
    </div>
    <CommandLine />
  </main>
);

const StatusButton = ({ name, width, on, children }) => (
  <button
    aria-label={name}
    className={`h-[20px] shrink-0 flex items-center justify-center overflow-hidden ${width} ${on ? 'bg-[#5f8fc9]' : ''}`}
  >
    {children}
  </button>
);

const Compass = ({ children }) => (
  <Svg>
    <path d="M7.500 1l2.500 7 4.500 6-4.500-1.500-2.500-2-2.500 2L.5 14 5 8z" fill="#dfe3ea" stroke="none" />
    {children}
  </Svg>
);

const StatusBar = () => (
  <footer className="h-7 shrink-0 flex items-start justify-between border-b-[3px] border-[#3b414e] text-[10px] text-[#a8aeb9]">
    <div className="flex">
      <button className="w-[42px] h-4 pr-[9px] flex justify-end overflow-hidden rounded-br-lg bg-[#363d4a] font-bold text-white">Modello</button>
      <button className="w-[52px] h-4 ml-[2px] rounded-b-lg bg-[#2a303b]">Layout1</button>
      <button className="w-[54px] h-4 ml-1 rounded-b-lg bg-[#2a303b]">Layout2</button>
      <button aria-label="Nuovo layout" className="w-[18px] h-4 ml-[6px] flex items-center justify-center rounded-b-lg bg-[#2a303b]">
        <Svg w={7} h={7}><path d="M3.500 0v7M0 3.500h7" stroke="#a8aeb9" strokeWidth="1.500" /></Svg>
      </button>
    </div>
    <div className="mt-px w-[478px] flex bg-[#2f3643] overflow-hidden">
      <button className="w-[55px] h-5 shrink-0 text-[11px] text-[#e8eaee] border-r border-[#22262e]">MODELLO</button>
      <StatusButton name="Griglia" width="w-[22px]">
        <Svg><path d="M4.500 1.500v13M8.500 1.500v13M12.500 1.500v13M1.500 4.500h14M1.500 8.500h14M1.500 12.500h14" stroke="#c5cad3" /></Svg>
      </StatusButton>
      <StatusButton name="Snap" width="w-[20px]">
        <Svg w={12}><path d="M1 4h10M1 8h10M1 12h10" stroke="#dfe3ea" strokeWidth="2" strokeDasharray="2 2" /></Svg>
      </StatusButton>
      <StatusButton name="Opzioni snap" width="w-[17px]"><Caret /></StatusButton>
      <StatusButton name="Orto" width="w-[20px]" on>
        <Svg><path d="M2.500 1v13.500H15M2.500 10.500h4v4" stroke="#dfe9f5" /></Svg>
      </StatusButton>
      <StatusButton name="Polare" width="w-[22px]">
        <Svg>
          <path d="M13 11a5.500 5.500 0 11-1.500-7.500M7 8.500h8M7 8.500l6-6" />
        </Svg>
      </StatusButton>
      <StatusButton name="Opzioni polare" width="w-[13px]"><Caret /></StatusButton>
      <StatusButton name="Isometrico" width="w-[22px]">
        <Svg>
          <path d="M3 2l10 11" stroke="#a2a9b5" />
          <path d="M8 1v14" stroke="#7b8390" />
        </Svg>
      </StatusButton>
      <StatusButton name="Opzioni isometrico" width="w-[13px]"><Caret /></StatusButton>
      <StatusButton name="Puntamento" width="w-[21px]" on>
        <Svg><path d="M14 2L2 13.500h13" stroke="#e6eef8" /><path d="M6 8h3v3H6z" fill="#e6eef8" stroke="none" /></Svg>
      </StatusButton>
      <StatusButton name="Snap ad oggetto" width="w-[21px] border-l border-[#2f3643]" on>
        <Svg><path d="M3.500 3.500h11v11h-11z" stroke="#e6eef8" /><path d="M1.500 1.500h4v4h-4z" fill="#5f8fc9" stroke="#e6eef8" /></Svg>
      </StatusButton>
      <StatusButton name="Opzioni snap ad oggetto" width="w-[16px] pr-1"><Caret /></StatusButton>
      <StatusButton name="Visibilità annotazioni" width="w-[20px]" on>
        <Compass><circle cx="12.500" cy="4" r="2" stroke="#cfe0f2" /></Compass>
      </StatusButton>
      <StatusButton name="Scala automatica" width="w-[22px]">
        <Compass><path d="M13 1l-2 3h3l-2 3" stroke="#dfe3ea" /></Compass>
      </StatusButton>
      <StatusButton name="Annotazioni" width="w-[18px]"><Compass /></StatusButton>
      <button className="w-[33px] shrink-0 h-5 flex items-center justify-center gap-[3px] border-r border-[#22262e] text-[#dfe3ea]">
        1:1 <Caret />
      </button>
      <StatusButton name="Area di lavoro" width="w-[22px]">
        <Svg>
          <circle cx="8" cy="8" r="4" stroke="#dfe3ea" strokeWidth="2.500" />
          <circle cx="8" cy="8" r="6" stroke="#dfe3ea" strokeWidth="2" strokeDasharray="2.400 2.300" />
        </Svg>
      </StatusButton>
      <StatusButton name="Opzioni area di lavoro" width="w-[12px]"><Caret /></StatusButton>
      <StatusButton name="Monitor annotazioni" width="w-[22px]">
        <Svg w={14} h={14}><path d="M7 0v14M0 7h14" stroke="#dfe3ea" strokeWidth="2" /></Svg>
      </StatusButton>
      <StatusButton name="Isola oggetti" width="w-[25px]">
        <Svg>
          <path d="M2.500 1.500h5v5h-5zM7.500 9.500l3 5h-6z" stroke="#c9cdd5" />
          <circle cx="12" cy="7.500" r="2.500" stroke="#c9cdd5" />
        </Svg>
      </StatusButton>
      <StatusButton name="Prestazioni grafiche" width="w-[22px]">
        <Svg w={18} h={18}>
          <circle cx="10" cy="7" r="6" fill="#3f78b8" stroke="none" />
          <path d="M4 6c4-2 8-2 12 0M10 1v12" stroke="#8fb9e2" />
          <path d="M1 10h6v6H1z" fill="#f5b83d" stroke="none" />
          <path d="M8 12l3 4 6-7" stroke="#59b24c" strokeWidth="2.500" />
        </Svg>
      </StatusButton>
      <StatusButton name="Schermo intero" width="w-[20px] pl-1">
        <Svg w={16}>
          <path d="M1.500 3.500h16v9h-16z" stroke="#c9cdd5" />
          <path d="M4 10.500l3-3M4 8v2.500h2.500M15 5.500l-3 3" stroke="#c9cdd5" />
        </Svg>
      </StatusButton>
    </div>
  </footer>
);

const App = () => (
  <div className="h-screen flex flex-col overflow-hidden bg-[#222630] font-['Noto_Sans','Liberation_Sans',sans-serif]">
    <TitleBar />
    <TabBar />
    <Ribbon />
    <FileTabs />
    <Canvas />
    <StatusBar />
  </div>
);

export default App;
